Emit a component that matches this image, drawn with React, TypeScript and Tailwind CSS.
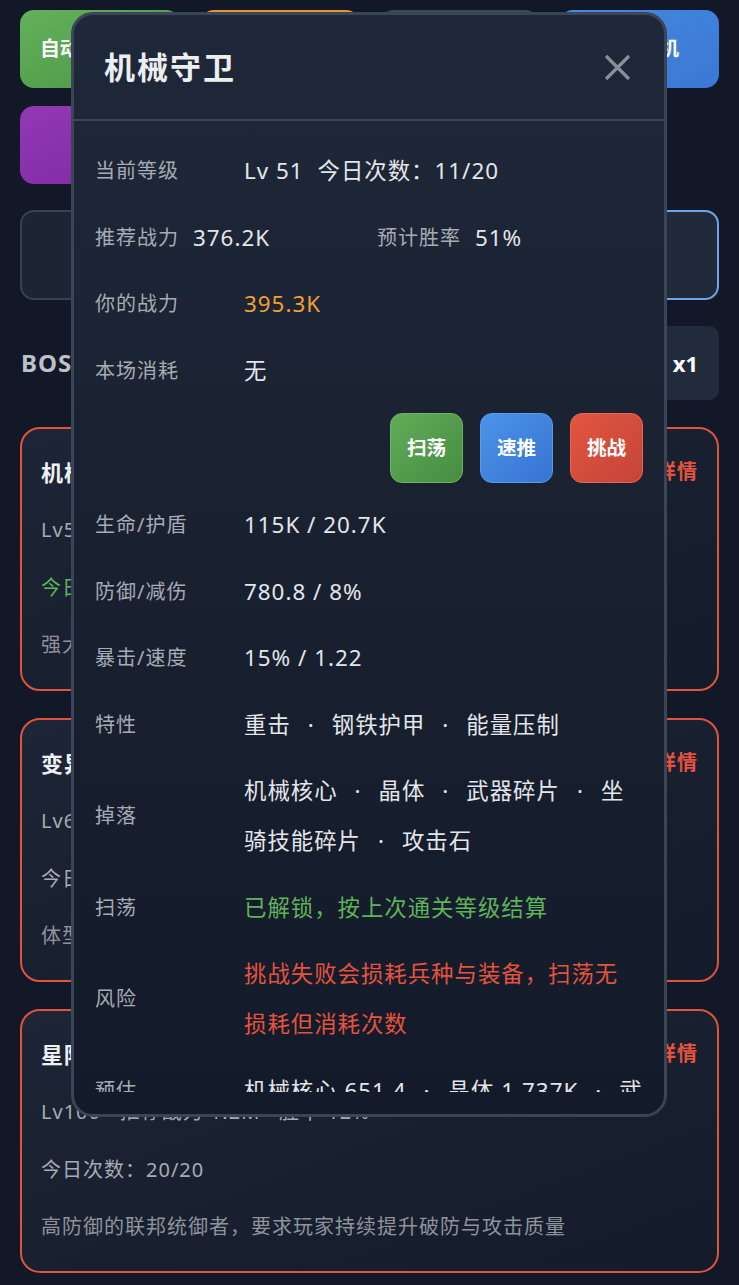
const FONT = { fontFamily: '"Noto Sans", "Noto Sans CJK SC", sans-serif' }

type Row = { label: string; value?: React.ReactNode; tone?: 'plain' | 'orange' | 'green' | 'red'; nowrap?: boolean }

function Dots({ items }: { items: string[] }) {
  return (
    <>
      {items.map((t, i) => (
        <span key={i}>
          {i > 0 && <span className="inline-block w-[41px] text-center">·</span>}
          {t}
        </span>
      ))}
    </>
  )
}

const TONE = {
  plain: 'text-[#e4e6ea]',
  orange: 'text-[#f0a02e]',
  green: 'text-[#5fb35a]',
  red: 'text-[#e5533f]',
}

function InfoRow({ label, value, tone = 'plain', nowrap }: Row) {
  return (
    <div className="flex items-center py-[8.25px]">
      <div className="w-[149px] shrink-0 text-[20px] leading-[50px] tracking-[1px] text-[#a7abb3]">{label}</div>
      <div
        className={`min-w-0 flex-1 pr-[4px] text-[22.4px] leading-[50px] tracking-[1px] ${TONE[tone]} ${
          nowrap ? 'overflow-hidden whitespace-nowrap' : ''
        }`}
      >
        {value}
      </div>
    </div>
  )
}

const AFTER: Row[] = [
  { label: '生命/护盾', value: '115K / 20.7K' },
  { label: '防御/减伤', value: '780.8 / 8%' },
  { label: '暴击/速度', value: '15% / 1.22' },
  { label: '特性', value: <Dots items={['重击', '钢铁护甲', '能量压制']} /> },
  { label: '掉落', value: <Dots items={['机械核心', '晶体', '武器碎片', '坐骑技能碎片', '攻击石']} /> },
  { label: '扫荡', value: '已解锁，按上次通关等级结算', tone: 'green' },
  { label: '风险', value: '挑战失败会损耗兵种与装备，扫荡无损耗但消耗次数', tone: 'red' },
  {
    label: '预估',
    value: <Dots items={['机械核心 651.4', '晶体 1.737K', '武器碎片 312', '攻击石 88']} />,
    nowrap: true,
  },
]

const BOSSES = [
  {
    name: '机械守卫',
    lv: 'Lv51 · 推荐战力 376.2K · 胜率 51%',
    today: '今日次数：11/20',
    todayGreen: true,
    desc: '强大的机械造物，护甲坚固，擅长重击压制',
  },
  {
    name: '变异巨兽',
    lv: 'Lv65 · 推荐战力 512.8K · 胜率 38%',
    today: '今日次数：20/20',
    todayGreen: false,
    desc: '体型庞大的变异生物，生命值极高',
  },
  {
    name: '星际统帅',
    lv: 'Lv100 · 推荐战力 1.2M · 胜率 12%',
    today: '今日次数：20/20',
    todayGreen: false,
    desc: '高防御的联邦统御者，要求玩家持续提升破防与攻击质量',
  },
]

function BossCard({ b }: { b: (typeof BOSSES)[number] }) {
  return (
    <div className="h-[264px] rounded-[20px] border-2 border-[#e0533d] bg-gradient-to-br from-[#1d2536] to-[#141b2a] px-[19px] pt-[26px]">
      <div className="flex items-center justify-between">
        <span className="text-[22px] leading-[34px] font-bold tracking-[1px] text-[#eef0f3]">{b.name}</span>
        <span className="text-[20px] font-bold tracking-[1px] text-[#e5533f]">详情</span>
      </div>
      <div className="mt-[12px] flex flex-col text-[20px] tracking-[1px]">
        <div className="h-[57.5px] leading-[57.5px] text-[#a7abb3]">{b.lv}</div>
        <div className={`h-[57.5px] leading-[57.5px] ${b.todayGreen ? 'text-[#5fb35a]' : 'text-[#a7abb3]'}`}>{b.today}</div>
        <div className="h-[57.5px] leading-[57.5px] text-[#8f949c]">{b.desc}</div>
      </div>
    </div>
  )
}

export default function App() {
  return (
    <div className="relative min-h-[1285px] bg-[#121827] px-5 pt-[10px]" style={FONT}>
      <div className="grid grid-cols-4 gap-5">
        <div className="flex h-[78px] items-center justify-center rounded-[14px] bg-gradient-to-br from-[#64b05b] to-[#4b9545] text-[20px] font-bold text-white">
          自动挑战全部
        </div>
        <div className="flex h-[78px] items-center justify-center rounded-[14px] border-t-2 border-[#e8952a] bg-[#253042] text-[20px] font-bold text-white">
          一键领取
        </div>
        <div className="flex h-[78px] items-center justify-center rounded-[14px] border-t-2 border-[#3d4859] bg-[#2a3445] text-[20px] font-bold text-white">
          排行榜
        </div>
        <div className="flex h-[78px] items-center justify-center rounded-[14px] bg-gradient-to-br from-[#4589e0] to-[#3a78d4] text-[20px] font-bold text-white">
          离线挂机
        </div>
      </div>
      <div className="mt-[18px] grid grid-cols-4 gap-5">
        <div className="flex h-[78px] items-center justify-center rounded-[14px] bg-gradient-to-br from-[#9337b6] to-[#7d2aa0] text-[20px] font-bold text-white">
          宝箱
        </div>
      </div>
      <div className="mt-[26px] grid grid-cols-2 gap-5">
        <div className="h-[90px] rounded-[14px] border-2 border-[#364254] bg-[#1d2535]" />
        <div className="h-[90px] rounded-[14px] border-2 border-[#6aa6ea] bg-[#212a3b]" />
      </div>
      <div className="mt-[26px] flex h-[74px] items-center justify-between">
        <span className="pl-px text-[24px] font-bold tracking-[1px] text-[#bcc0c7]">BOSS挑战</span>
        <span className="flex h-[74px] items-center rounded-[10px] bg-[#222b3c] pl-[20px] pr-[21px] text-[22px] font-bold text-white">
          倍速 x1
        </span>
      </div>
      <div className="mt-[27px] flex flex-col gap-[27px] pb-[13px]">
        {BOSSES.map((b) => (
          <BossCard key={b.name} b={b} />
        ))}
      </div>

      <div className="absolute left-[71px] top-[12px] flex h-[1105px] w-[596px] flex-col overflow-hidden rounded-[22px] border-[3px] border-[#3a4557] bg-gradient-to-b from-[#1f2839] to-[#131a29]">
        <div className="flex h-[104px] shrink-0 items-center justify-between pl-[30px] pr-[33px]">
          <span className="text-[31px] font-bold tracking-[2px] text-[#eceef1]">机械守卫</span>
          <svg width="27" height="27" viewBox="0 0 27 27">
            <path d="M2 2 L25 25 M25 2 L2 25" stroke="#8a8f97" strokeWidth="3.2" strokeLinecap="butt" />
          </svg>
        </div>
        <div className="h-[2px] shrink-0 bg-[#3a4557]" />
        <div className="min-h-0 flex-1 overflow-hidden px-[21px] pt-[17px]">
          <InfoRow
            label="当前等级"
            value={
              <>
                Lv 51<span className="ml-[14px]">今日次数：11/20</span>
              </>
            }
          />
          <div className="grid grid-cols-2 gap-x-4 py-[8.25px]">
            <div className="flex items-center gap-[14px]">
              <span className="text-[20px] leading-[50px] tracking-[1px] text-[#a7abb3]">推荐战力</span>
              <span className="text-[22.4px] leading-[50px] tracking-[1px] text-[#e4e6ea]">376.2K</span>
            </div>
            <div className="flex items-center gap-[14px]">
              <span className="text-[20px] leading-[50px] tracking-[1px] text-[#a7abb3]">预计胜率</span>
              <span className="text-[22.4px] leading-[50px] tracking-[1px] text-[#e4e6ea]">51%</span>
            </div>
          </div>
          <InfoRow label="你的战力" value="395.3K" tone="orange" />
          <InfoRow label="本场消耗" value="无" />
          <div className="flex justify-end gap-[17px] py-[9px]">
            <button className="h-[70px] w-[73px] rounded-[12px] border border-[#6cb564] bg-gradient-to-br from-[#62ac59] to-[#468d40] text-[19.6px] font-bold text-white">
              扫荡
            </button>
            <button className="h-[70px] w-[73px] rounded-[12px] border border-[#5a9bef] bg-gradient-to-br from-[#4b93ea] to-[#3874d2] text-[19.6px] font-bold text-white">
              速推
            </button>
            <button className="h-[70px] w-[73px] rounded-[12px] border border-[#ea6650] bg-gradient-to-br from-[#e2563f] to-[#c6433a] text-[19.6px] font-bold text-white">
              挑战
            </button>
          </div>
          {AFTER.map((r) => (
            <InfoRow key={r.label} {...r} />
          ))}
        </div>
        <div className="h-[22px] shrink-0" />
      </div>
    </div>
  )
}
